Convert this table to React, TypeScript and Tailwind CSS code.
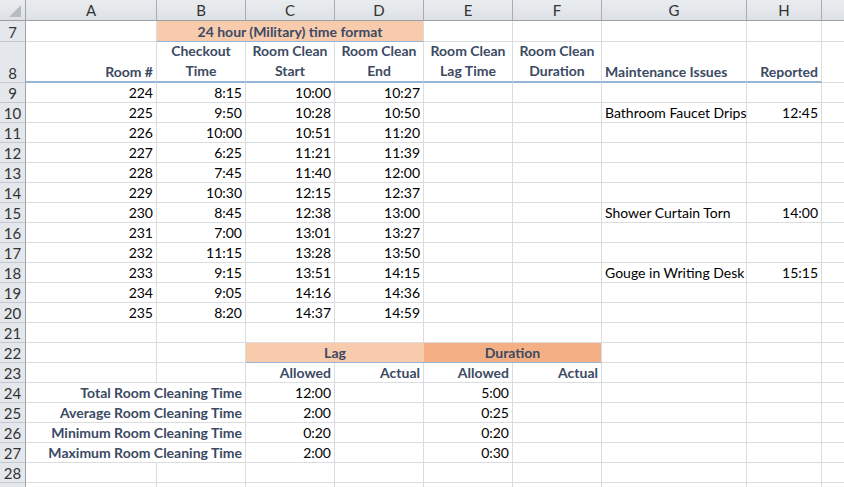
import React from 'react';

type Align = 'left' | 'right' | 'center';

interface CellProps {
  w: string;
  text?: React.ReactNode;
  align?: Align;
  bold?: boolean;
  bg?: string;
  blue?: 'thin' | 'thick';
  noRight?: boolean;
}

const alignClass: Record<Align, string> = {
  left: 'justify-start text-left',
  right: 'justify-end text-right',
  center: 'justify-center text-center',
};

const Cell: React.FC<CellProps> = ({ w, text, align = 'right', bold, bg, blue, noRight }) => {
  const bottom = blue === 'thick' ? 'border-b-2 border-b-[#95b3d7]' : blue === 'thin' ? 'border-b-[1.5px] border-b-[#95b3d7]' : 'border-b border-b-[#dadcdd]';
  return (
    <div
      className={`${w} shrink-0 h-full flex items-end px-[3px] pb-0 whitespace-nowrap ${bottom} ${noRight ? '' : 'border-r border-r-[#dadcdd]'} ${alignClass[align]} ${bold ? 'font-bold text-[#3c4a63]' : 'text-black'} ${bg ?? 'bg-white'}`}
    >
      {text}
    </div>
  );
};

const RowNum: React.FC<{ n?: number }> = ({ n }) => (
  <div className="w-[26px] shrink-0 h-full bg-[#e4e7eb] border-r border-r-[#9fa4aa] border-b border-b-[#c3c8ce] flex items-end justify-center pb-0 text-[#333] text-[15px]">
    {n}
  </div>
);

const Row: React.FC<{ n?: number; h?: string; children?: React.ReactNode }> = ({ n, h = 'h-[20px]', children }) => (
  <div className={`flex ${h} leading-[18px]`}>
    <RowNum n={n} />
    {children}
    <div className="flex-1 h-full border-b border-b-[#dadcdd] bg-white" />
  </div>
);

const cols: { w: string; label: string }[] = [
  { w: 'w-[131px]', label: 'A' },
  { w: 'w-[89px]', label: 'B' },
  { w: 'w-[89px]', label: 'C' },
  { w: 'w-[89px]', label: 'D' },
  { w: 'w-[89px]', label: 'E' },
  { w: 'w-[89px]', label: 'F' },
  { w: 'w-[145px]', label: 'G' },
  { w: 'w-[75px]', label: 'H' },
];

const rooms = [
  ['224', '8:15', '10:00', '10:27', '', ''],
  ['225', '9:50', '10:28', '10:50', 'Bathroom Faucet Drips', '12:45'],
  ['226', '10:00', '10:51', '11:20', '', ''],
  ['227', '6:25', '11:21', '11:39', '', ''],
  ['228', '7:45', '11:40', '12:00', '', ''],
  ['229', '10:30', '12:15', '12:37', '', ''],
  ['230', '8:45', '12:38', '13:00', 'Shower Curtain Torn', '14:00'],
  ['231', '7:00', '13:01', '13:27', '', ''],
  ['232', '11:15', '13:28', '13:50', '', ''],
  ['233', '9:15', '13:51', '14:15', 'Gouge in Writing Desk', '15:15'],
  ['234', '9:05', '14:16', '14:36', '', ''],
  ['235', '8:20', '14:37', '14:59', '', ''],
];

const summary = [
  ['Total Room Cleaning Time', '12:00', '5:00'],
  ['Average Room Cleaning Time', '2:00', '0:25'],
  ['Minimum Room Cleaning Time', '0:20', '0:20'],
  ['Maximum Room Cleaning Time', '2:00', '0:30'],
];

const Blank: React.FC = () => (
  <>
    {cols.map(c => (
      <Cell key={c.label} w={c.w} />
    ))}
  </>
);

const TwoLine: React.FC<{ a: string; b: string }> = ({ a, b }) => (
  <div className="flex flex-col items-center leading-[20px]">
    <span>{a}</span>
    <span>{b}</span>
  </div>
);

export default function App() {
  return (
    <div className="w-[844px] h-[487px] overflow-hidden bg-white text-[14px]" style={{ fontFamily: 'Lato, "Open Sans", sans-serif' }}>
      {/* column headers */}
      <div className="flex h-[21px] bg-gradient-to-b from-[#eaedf0] to-[#dde1e6] border-b border-b-[#9c9fa4] text-[#333] text-[15px]">
        <div className="w-[26px] shrink-0 h-full border-r border-r-[#9fa4aa] relative">
          <svg width="26" height="20" className="absolute left-0 top-0">
            <polygon points="21,5 21,17 9,17" fill="#b7bcc3" />
          </svg>
        </div>
        {cols.map(c => (
          <div key={c.label} className={`${c.w} shrink-0 h-full border-r border-r-[#a9adb3] flex items-center justify-center`}>
            {c.label}
          </div>
        ))}
        <div className="flex-1" />
      </div>

      <Row n={7} h="h-[21px]">
        <Cell w="w-[131px]" />
        <Cell w="w-[267px]" align="center" bold bg="bg-[#f8cbad]" blue="thin" text="24 hour (Military) time format" />
        <Cell w="w-[89px]" />
        <Cell w="w-[89px]" />
        <Cell w="w-[145px]" />
        <Cell w="w-[75px]" />
      </Row>

      <Row n={8} h="h-[41px]">
        <Cell w="w-[131px]" bold blue="thick" text="Room #" />
        <Cell w="w-[89px]" bold blue="thick" align="center" text={<TwoLine a="Checkout" b="Time" />} />
        <Cell w="w-[89px]" bold blue="thick" align="center" text={<TwoLine a="Room Clean" b="Start" />} />
        <Cell w="w-[89px]" bold blue="thick" align="center" text={<TwoLine a="Room Clean" b="End" />} />
        <Cell w="w-[89px]" bold blue="thick" align="center" text={<TwoLine a="Room Clean" b="Lag Time" />} />
        <Cell w="w-[89px]" bold blue="thick" align="center" text={<TwoLine a="Room Clean" b="Duration" />} />
        <Cell w="w-[145px]" bold blue="thick" align="left" text="Maintenance Issues" />
        <Cell w="w-[75px]" bold blue="thick" text="Reported" />
      </Row>

      {rooms.map((r, i) => (
        <Row key={r[0]} n={9 + i}>
          <Cell w="w-[131px]" text={r[0]} />
          <Cell w="w-[89px]" text={r[1]} />
          <Cell w="w-[89px]" text={r[2]} />
          <Cell w="w-[89px]" text={r[3]} />
          <Cell w="w-[89px]" />
          <Cell w="w-[89px]" />
          <Cell w="w-[145px]" align="left" text={r[4]} />
          <Cell w="w-[75px]" text={r[5]} />
        </Row>
      ))}

      <Row n={21}>
        <Blank />
      </Row>

      <Row n={22}>
        <Cell w="w-[131px]" />
        <Cell w="w-[89px]" />
        <Cell w="w-[178px]" align="center" bold bg="bg-[#f8cbad]" blue="thin" noRight text="Lag" />
        <Cell w="w-[178px]" align="center" bold bg="bg-[#f4b084]" blue="thin" text="Duration" />
        <Cell w="w-[145px]" />
        <Cell w="w-[75px]" />
      </Row>

      <Row n={23}>
        <Cell w="w-[131px]" />
        <Cell w="w-[89px]" />
        <Cell w="w-[89px]" bold text="Allowed" />
        <Cell w="w-[89px]" bold text="Actual" />
        <Cell w="w-[89px]" bold text="Allowed" />
        <Cell w="w-[89px]" bold text="Actual" />
        <Cell w="w-[145px]" />
        <Cell w="w-[75px]" />
      </Row>

      {summary.map((s, i) => (
        <Row key={s[0]} n={24 + i}>
          <Cell w="w-[220px]" bold text={s[0]} />
          <Cell w="w-[89px]" text={s[1]} />
          <Cell w="w-[89px]" />
          <Cell w="w-[89px]" text={s[2]} />
          <Cell w="w-[89px]" />
          <Cell w="w-[145px]" />
          <Cell w="w-[75px]" />
        </Row>
      ))}

      <Row n={28}>
        <Blank />
      </Row>
      <Row>
        <Blank />
      </Row>
    </div>
  );
}
